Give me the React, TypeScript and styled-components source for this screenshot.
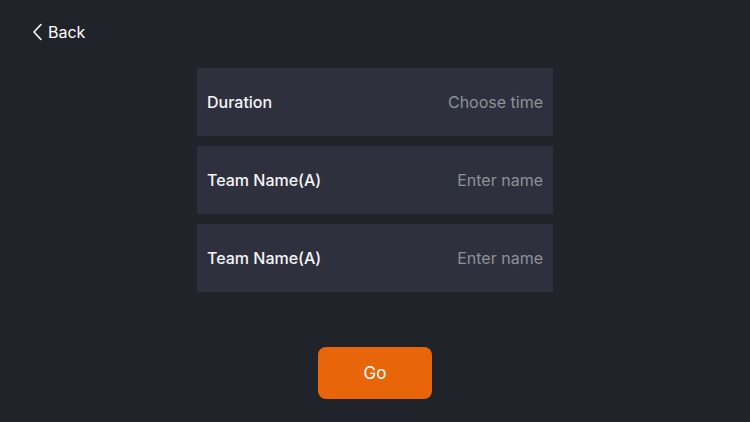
import React from 'react';
import styled, { createGlobalStyle } from 'styled-components';

const GlobalStyle = createGlobalStyle`
  html, body {
    margin: 0;
    padding: 0;
    background: #21232b;
  }
  * {
    box-sizing: border-box;
  }
`;

const Screen = styled.div`
  width: 750px;
  height: 422px;
  background: #21232b;
  font-family: Inter, "Noto Sans", sans-serif;
  color: #ffffff;
  display: flex;
  flex-direction: column;
`;

const Header = styled.div`
  height: 68px;
  padding: 22px 0 0 32px;
`;

const BackButton = styled.button`
  display: flex;
  align-items: center;
  gap: 4px;
  background: none;
  border: none;
  padding: 0;
  color: #ffffff;
  font-family: inherit;
  font-size: 16px;
  cursor: pointer;
`;

const Form = styled.div`
  display: flex;
  flex-direction: column;
  align-items: center;
  gap: 10px;
`;

const Row = styled.div`
  width: 356px;
  height: 68px;
  background: #2e303d;
  display: flex;
  align-items: center;
  justify-content: space-between;
  padding: 0 10px;
`;

const Label = styled.span`
  font-size: 16px;
  font-weight: 500;
  color: #f4f4f6;
`;

const Placeholder = styled.span`
  font-size: 16px;
  color: #8e909a;
`;

const Footer = styled.div`
  display: flex;
  justify-content: center;
  padding-top: 55px;
`;

const GoButton = styled.button`
  width: 114px;
  height: 52px;
  border: none;
  border-radius: 8px;
  background: #e8650a;
  color: #ffffff;
  font-family: inherit;
  font-size: 17px;
  cursor: pointer;
`;

const rows = [
  { label: 'Duration', hint: 'Choose time' },
  { label: 'Team Name(A)', hint: 'Enter name' },
  { label: 'Team Name(A)', hint: 'Enter name' },
];

export default function App() {
  return (
    <>
      <GlobalStyle />
      <Screen>
        <Header>
          <BackButton>
            <svg width="12" height="18" viewBox="0 0 12 18" fill="none">
              <path d="M9 1.5L2 9l7 7.5" stroke="#fff" strokeWidth="1.6" strokeLinecap="round" strokeLinejoin="round" />
            </svg>
            Back
          </BackButton>
        </Header>
        <Form>
          {rows.map((r, i) => (
            <Row key={i}>
              <Label>{r.label}</Label>
              <Placeholder>{r.hint}</Placeholder>
            </Row>
          ))}
        </Form>
        <Footer>
          <GoButton>Go</GoButton>
        </Footer>
      </Screen>
    </>
  );
}
